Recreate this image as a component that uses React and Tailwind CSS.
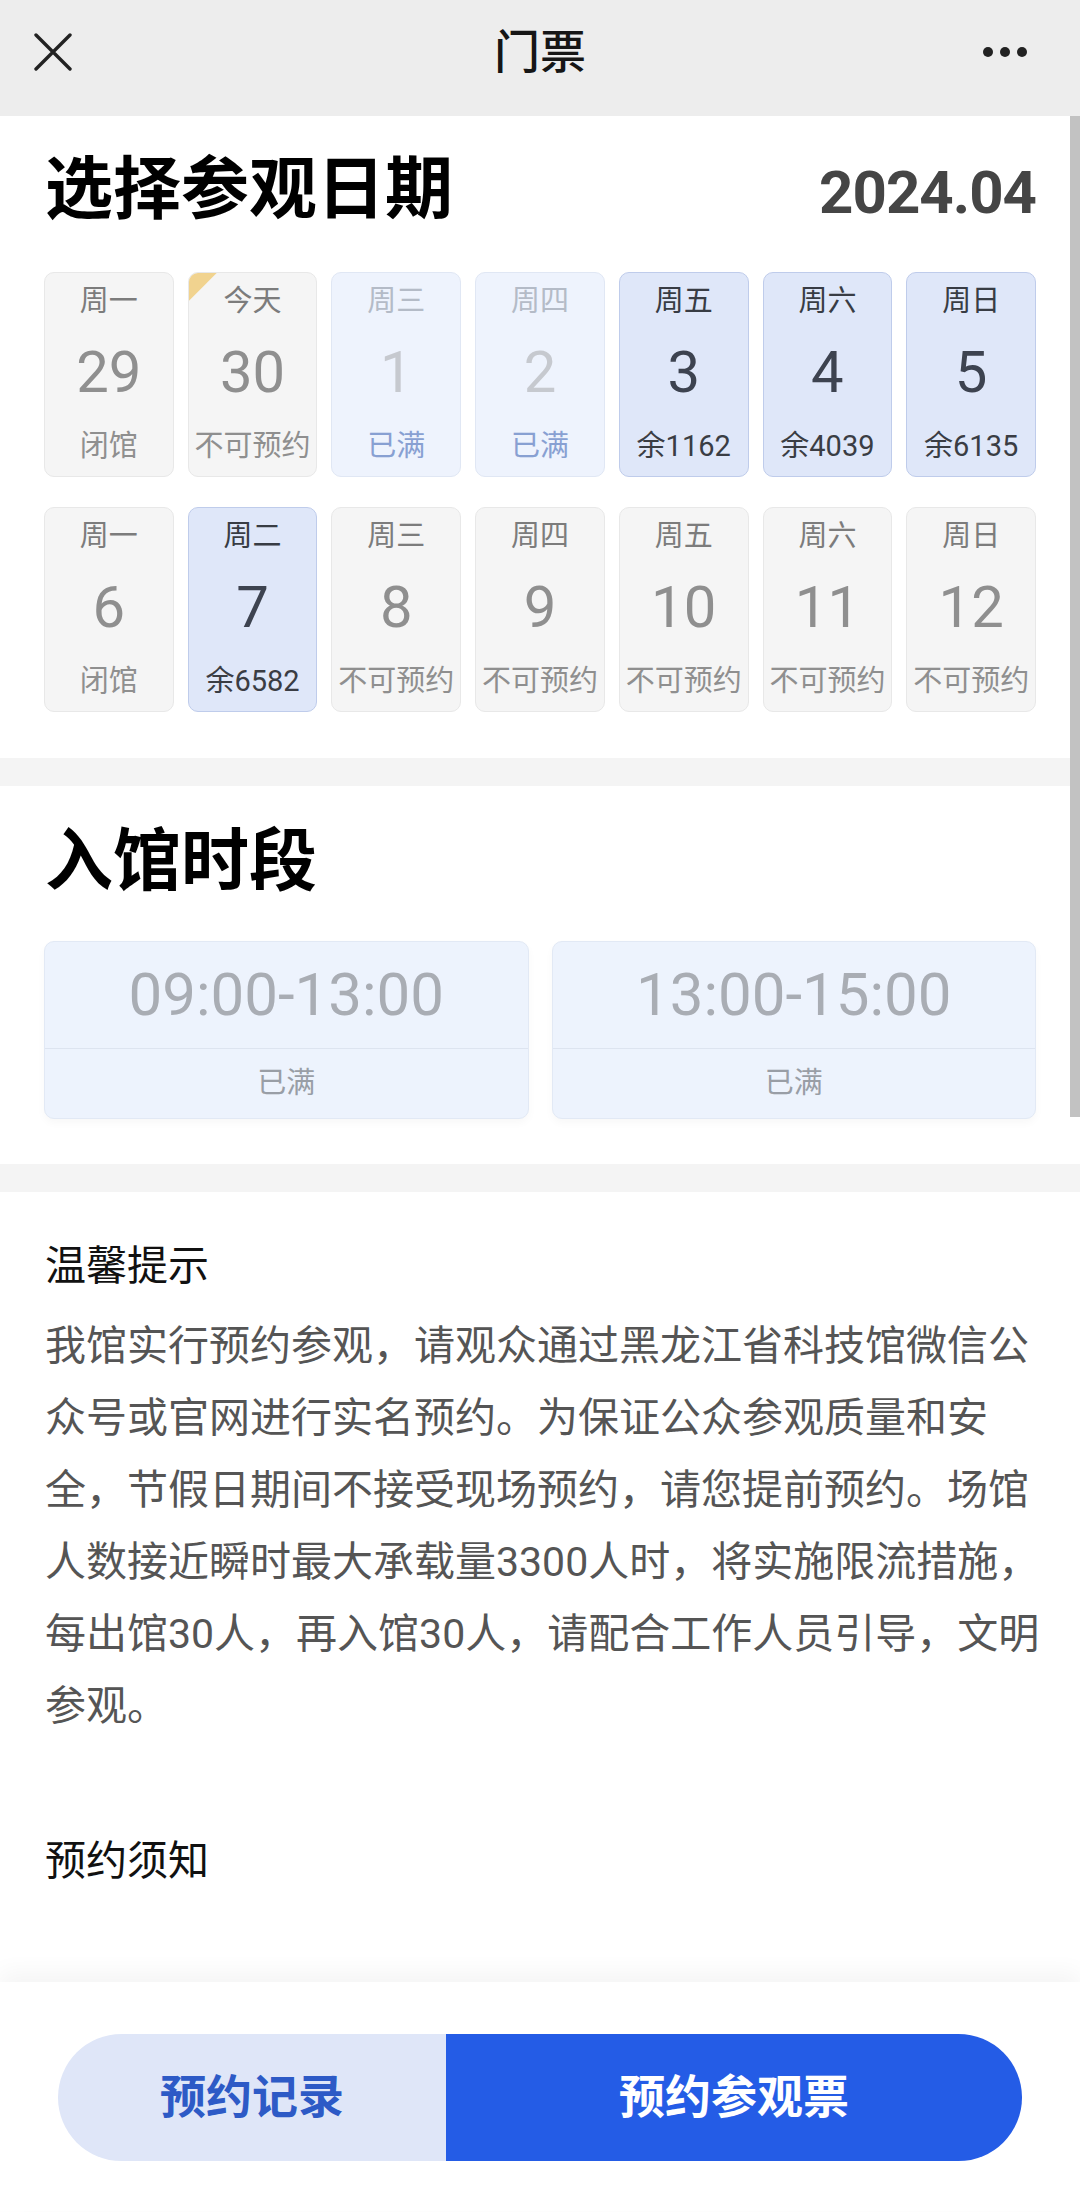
import React from "react";

const row1 = [
  { week: "周一", day: "29", status: "闭馆", type: "off" },
  { week: "今天", day: "30", status: "不可预约", type: "off", today: true },
  { week: "周三", day: "1", status: "已满", type: "full" },
  { week: "周四", day: "2", status: "已满", type: "full" },
  { week: "周五", day: "3", status: "余1162", type: "open" },
  { week: "周六", day: "4", status: "余4039", type: "open" },
  { week: "周日", day: "5", status: "余6135", type: "open" },
];

const row2 = [
  { week: "周一", day: "6", status: "闭馆", type: "off" },
  { week: "周二", day: "7", status: "余6582", type: "open" },
  { week: "周三", day: "8", status: "不可预约", type: "off" },
  { week: "周四", day: "9", status: "不可预约", type: "off" },
  { week: "周五", day: "10", status: "不可预约", type: "off" },
  { week: "周六", day: "11", status: "不可预约", type: "off" },
  { week: "周日", day: "12", status: "不可预约", type: "off" },
];

const slots = ["09:00-13:00", "13:00-15:00"];

const cardStyle = {
  off: {
    box: "bg-[#f5f5f5] border-[#e8e8e8]",
    week: "text-[#7c7c7c]",
    day: "text-[#8f8f8f]",
    status: "text-[#8f8f8f]",
  },
  full: {
    box: "bg-[#eef3fd] border-[#e0e7f4]",
    week: "text-[#b4bbc7]",
    day: "text-[#c6c9cf]",
    status: "text-[#88a0d2]",
  },
  open: {
    box: "bg-[#dfe7f9] border-[#bfcceb]",
    week: "text-[#383c44]",
    day: "text-[#3d4350]",
    status: "text-[#3a3d44]",
  },
};

const DateCard = ({ d }) => {
  const s = cardStyle[d.type];
  return (
    <div className={`relative h-[205px] rounded-[10px] border-[1.5px] overflow-hidden flex flex-col items-center pt-[10px] ${s.box}`}>
      {d.today && (
        <div className="absolute top-0 left-0 w-[28px] h-[28px] bg-[#f1d38f] [clip-path:polygon(0_0,100%_0,0_100%)]" />
      )}
      <div className={`h-[36px] leading-[36px] text-[29px] ${s.week}`}>{d.week}</div>
      <div className={`mt-[18px] h-[70px] leading-[70px] text-[58px] ${s.day}`}>{d.day}</div>
      <div className={`mt-[21px] h-[36px] leading-[36px] text-[29px] whitespace-nowrap ${s.status}`}>{d.status}</div>
    </div>
  );
};

export default function App() {
  return (
    <div className="relative w-[1080px] min-h-[2212px] bg-white font-[Roboto,'Noto_Sans_CJK_SC',sans-serif]">
      {/* title bar */}
      <div className="h-[116px] bg-[#ededed] grid grid-cols-[1fr_auto_1fr] items-center px-[34px] pb-[12px]">
        <svg width="38" height="38" viewBox="0 0 38 38">
          <path d="M2 2 L36 36 M36 2 L2 36" stroke="#222" strokeWidth="3.4" strokeLinecap="round" />
        </svg>
        <div className="text-[46px] leading-[60px] text-[#161616] font-medium">门票</div>
        <div className="flex gap-[7px] justify-self-end mr-[19px]">
          <span className="w-[10px] h-[10px] rounded-full bg-[#222]" />
          <span className="w-[10px] h-[10px] rounded-full bg-[#222]" />
          <span className="w-[10px] h-[10px] rounded-full bg-[#222]" />
        </div>
      </div>

      {/* date picker */}
      <div className="bg-white pt-[40px] pb-[46px] px-[44px]">
        <div className="h-[68px] flex items-baseline justify-between">
          <h1 className="text-[68px] leading-[68px] font-bold text-black ml-[1px]">选择参观日期</h1>
          <div className="text-[60px] leading-[68px] font-bold text-[#454545] tracking-[-1px]">2024.04</div>
        </div>
        <div className="mt-[48px] grid grid-cols-7 gap-x-[14px] gap-y-[30px]">
          {[...row1, ...row2].map((d, i) => (
            <DateCard key={i} d={d} />
          ))}
        </div>
      </div>

      <div className="h-[28px] bg-[#f4f4f4]" />

      {/* time slots */}
      <div className="bg-white pt-[42px] pb-[45px] px-[44px]">
        <h2 className="h-[68px] text-[68px] leading-[68px] font-bold text-black ml-[1px]">入馆时段</h2>
        <div className="mt-[45px] grid grid-cols-2 gap-[23px]">
          {slots.map((t) => (
            <div key={t} className="h-[178px] rounded-[10px] border-[1.5px] border-[#e2e9f5] bg-[#edf3fd] flex flex-col shadow-[0_4px_8px_rgba(0,0,0,0.03)]">
              <div className="h-[106px] flex items-center justify-center text-[60px] text-[#a9adb4]">{t}</div>
              <div className="flex-1 border-t-[1.5px] border-[#dde4f0] flex items-center justify-center text-[29px] text-[#999ea6]">已满</div>
            </div>
          ))}
        </div>
      </div>

      <div className="h-[28px] bg-[#f4f4f4]" />

      {/* notes */}
      <div className="bg-white pt-[38px] pb-[85px] pl-[45px] pr-[30px] text-[41px]">
        <div className="leading-[72px] text-[#111]">温馨提示</div>
        <p className="mt-[8px] leading-[72px] text-[#555]">
          我馆实行预约参观，请观众通过黑龙江省科技馆微信公众号或官网进行实名预约。为保证公众参观质量和安全，节假日期间不接受现场预约，请您提前预约。场馆人数接近瞬时最大承载量3300人时，将实施限流措施，每出馆30人，再入馆30人，请配合工作人员引导，文明参观。
        </p>
        <div className="mt-[83px] leading-[72px] text-[#111]">预约须知</div>
      </div>

      {/* bottom bar */}
      <div className="h-[229px] bg-white pt-[52px] pl-[58px] pr-[58px] shadow-[0_-10px_22px_rgba(0,0,0,0.045)]">
        <div className="h-[127px] flex rounded-full overflow-hidden">
          <button className="w-[388px] bg-[#dfe6f8] text-[#2d5ac6] text-[46px] font-bold">预约记录</button>
          <button className="flex-1 bg-[#245ce6] text-white text-[46px] font-bold">预约参观票</button>
        </div>
      </div>

      {/* scrollbar */}
      <div className="absolute right-0 top-[116px] w-[10px] h-[1001px] bg-[#c2c2c2]" />
    </div>
  );
}
